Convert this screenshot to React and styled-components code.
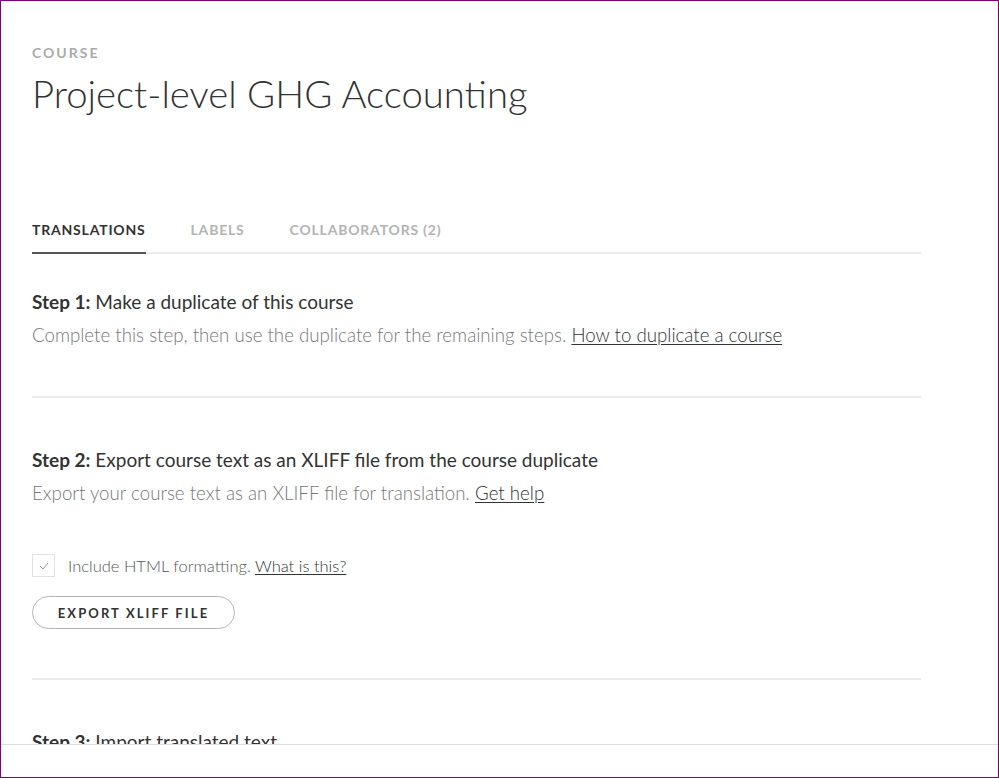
import React from 'react';
import styled, { createGlobalStyle } from 'styled-components';

const GlobalStyle = createGlobalStyle`
  html, body {
    margin: 0;
    padding: 0;
    background: #fff;
  }
  body {
    font-family: Lato, "Liberation Sans", sans-serif;
    color: #333;
  }
`;

const Frame = styled.div`
  width: 999px;
  height: 778px;
  box-sizing: border-box;
  border: 1px solid #800080;
  display: flex;
  flex-direction: column;
  overflow: hidden;
`;

const Scroller = styled.div`
  flex: 1;
  overflow: hidden;
`;

const Content = styled.div`
  width: 889px;
  padding: 43px 0 0 31px;
`;

const Eyebrow = styled.div`
  font-size: 14px;
  line-height: 17px;
  font-weight: 700;
  letter-spacing: 2px;
  color: #aaa;
`;

const Title = styled.h1`
  margin: 9px 0 0;
  font-size: 38.3px;
  line-height: 46px;
  font-weight: 300;
  color: #333;
`;

const Tabs = styled.div`
  display: flex;
  gap: 45px;
  margin-top: 105px;
  border-bottom: 2px solid #ececec;
`;

const Tab = styled.div`
  font-size: 14px;
  line-height: 17px;
  font-weight: 700;
  letter-spacing: 0.8px;
  color: ${(p) => (p.$active ? '#333' : '#b3b3b3')};
  padding-bottom: 14px;
  margin-bottom: -2px;
  border-bottom: 2px solid ${(p) => (p.$active ? '#555' : 'transparent')};
`;

const Section = styled.section`
  padding: ${(p) => (p.$first ? '36px' : '50px')} 0 49px;
  border-bottom: ${(p) => (p.$last ? 'none' : '2px solid #ececec')};
`;

const StepTitle = styled.div`
  font-size: 19px;
  line-height: 24px;
  color: #333;

  b {
    font-weight: 700;
  }
`;

const StepText = styled.div`
  margin-top: 9px;
  font-size: 18.7px;
  line-height: 24px;
  font-weight: 300;
  color: #777;
`;

const HelpLink = styled.a`
  color: #333;
  text-decoration: underline;
  text-underline-offset: 2px;
  cursor: pointer;
`;

const CheckRow = styled.label`
  display: flex;
  align-items: center;
  gap: 13px;
  margin-top: 49px;
  font-size: 16.5px;
  font-weight: 300;
  color: #555;
`;

const CheckBox = styled.span`
  width: 23px;
  height: 23px;
  box-sizing: border-box;
  border: 1px solid #e2e2e2;
  display: flex;
  align-items: center;
  justify-content: center;
`;

const Button = styled.button`
  margin-top: 19px;
  height: 33px;
  width: 203px;
  border: 1px solid #b5b5b5;
  border-radius: 17px;
  background: #fff;
  font-family: Lato, "Liberation Sans", sans-serif;
  font-size: 13px;
  font-weight: 700;
  letter-spacing: 2.1px;
  color: #333;
  cursor: pointer;
`;

const Footer = styled.div`
  height: 32px;
  flex: none;
  border-top: 1px solid #ddd;
  background: #fff;
`;

export default function App() {
  return (
    <>
      <GlobalStyle />
      <Frame>
        <Scroller>
          <Content>
            <Eyebrow>COURSE</Eyebrow>
            <Title>Project-level GHG Accounting</Title>
            <Tabs>
              <Tab $active>TRANSLATIONS</Tab>
              <Tab>LABELS</Tab>
              <Tab>COLLABORATORS (2)</Tab>
            </Tabs>
            <Section $first>
              <StepTitle>
                <b>Step 1:</b> Make a duplicate of this course
              </StepTitle>
              <StepText>
                Complete this step, then use the duplicate for the remaining steps.{' '}
                <HelpLink>How to duplicate a course</HelpLink>
              </StepText>
            </Section>
            <Section>
              <StepTitle>
                <b>Step 2:</b> Export course text as an XLIFF file from the course duplicate
              </StepTitle>
              <StepText>
                Export your course text as an XLIFF file for translation.{' '}
                <HelpLink>Get help</HelpLink>
              </StepText>
              <CheckRow>
                <CheckBox>
                  <svg width="10" height="8" viewBox="0 0 10 8">
                    <polyline points="1,4 4,7 9,1" fill="none" stroke="#999" strokeWidth="1" />
                  </svg>
                </CheckBox>
                <span>
                  Include HTML formatting. <HelpLink>What is this?</HelpLink>
                </span>
              </CheckRow>
              <Button>EXPORT XLIFF FILE</Button>
            </Section>
            <Section $last>
              <StepTitle>
                <b>Step 3:</b> Import translated text
              </StepTitle>
            </Section>
          </Content>
        </Scroller>
        <Footer />
      </Frame>
    </>
  );
}
